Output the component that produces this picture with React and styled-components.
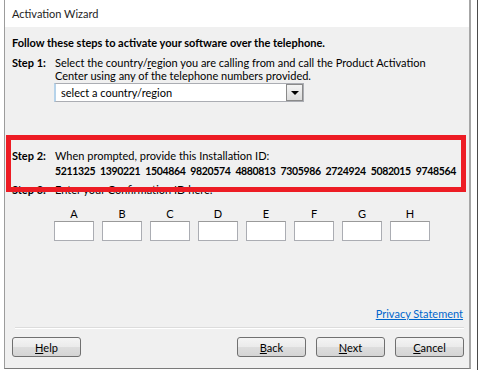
import React from 'react';
import styled, { createGlobalStyle } from 'styled-components';

const GlobalStyle = createGlobalStyle`
  html, body {
    margin: 0;
    padding: 0;
    background: #ffffff;
  }
  * {
    box-sizing: border-box;
  }
`;

const letters = ['A', 'B', 'C', 'D', 'E', 'F', 'G', 'H'];
const installationId = [
  '5211325', '1390221', '1504864', '9820574', '4880813',
  '7305986', '2724924', '5082015', '9748564',
];

const App = () => {
  return (
    <Page>
      <GlobalStyle />
      <Window>
        <TitleBar>Activation Wizard</TitleBar>
        <Body>
          <Intro>Follow these steps to activate your software over the telephone.</Intro>

          <StepRow top={7}>
            <StepLabel>Step 1:</StepLabel>
            <StepContent>
              <Text>
                Select the country/<u>r</u>egion you are calling from and call the Product Activation
                <br />
                Center using any of the telephone numbers provided.
              </Text>
              <Select>
                <span>select a country/region</span>
                <DropButton>
                  <Arrow />
                </DropButton>
              </Select>
            </StepContent>
          </StepRow>

          <StepRow top={47}>
            <StepLabel>Step 2:</StepLabel>
            <StepContent>
              <Text>When prompted, provide this Installation ID:</Text>
              <IdRow>
                {installationId.map((group) => (
                  <span key={group}>{group}</span>
                ))}
              </IdRow>
            </StepContent>
          </StepRow>

          <StepRow top={5}>
            <StepLabel>Step 3:</StepLabel>
            <StepContent>
              <Text>Enter your Confirmation ID here:</Text>
            </StepContent>
          </StepRow>

          <BoxGrid>
            {letters.map((l) => (
              <BoxColumn key={l}>
                <BoxLetter>{l}</BoxLetter>
                <CodeInput />
              </BoxColumn>
            ))}
          </BoxGrid>

          <Footer>
            <LinkRow>
              <PrivacyLink href="#">Privacy Statement</PrivacyLink>
            </LinkRow>
            <Separator />
            <ButtonRow>
              <Button>
                <u>H</u>elp
              </Button>
              <RightButtons>
                <Button>
                  <u>B</u>ack
                </Button>
                <Button>
                  <u>N</u>ext
                </Button>
                <Button>
                  <u>C</u>ancel
                </Button>
              </RightButtons>
            </ButtonRow>
          </Footer>
        </Body>
      </Window>
      <Highlight />
    </Page>
  );
};

export default App;

const Page = styled.div`
  position: relative;
  width: 478px;
  height: 370px;
  background: #ffffff;
  border-right: 1px solid #4a4a4a;
  font-family: Lato, 'Open Sans', sans-serif;
  font-size: 11px;
  color: #000000;
  overflow: hidden;
`;

const Window = styled.div`
  margin-left: 4px;
  width: 467px;
  height: 369px;
  border-left: 1px solid #9c9c9c;
  border-right: 2px solid #a6a6a6;
  border-bottom: 1px solid #7a7a7a;
  display: flex;
  flex-direction: column;
`;

const TitleBar = styled.div`
  height: 27px;
  flex: none;
  background: #ffffff;
  padding-left: 7px;
  display: flex;
  align-items: center;
  color: #1e1e1e;
`;

const Body = styled.div`
  flex: 1;
  background: #f0f0f0;
  padding: 9px 5px 11px 7px;
  display: flex;
  flex-direction: column;
`;

const Intro = styled.div`
  font-weight: 700;
  line-height: 13px;
  white-space: nowrap;
`;

const StepRow = styled.div`
  display: grid;
  grid-template-columns: 43px 1fr;
  margin-top: ${({ top }) => top}px;
  line-height: 13px;
`;

const StepLabel = styled.div`
  font-weight: 700;
`;

const StepContent = styled.div`
  display: flex;
  flex-direction: column;
`;

const Text = styled.div`
  white-space: nowrap;
  u {
    text-decoration-thickness: 1px;
  }
`;

const Select = styled.div`
  margin-top: 1px;
  margin-left: -1px;
  width: 250px;
  height: 19px;
  background: #ffffff;
  border: 1px solid #abadb3;
  border-left: 2px solid #b6d3ea;
  display: flex;
  align-items: center;
  justify-content: space-between;
  padding: 0 0 0 5px;
  span {
    line-height: 13px;
  }
`;

const DropButton = styled.div`
  width: 17px;
  height: 17px;
  border: 1px solid #8a8a8a;
  background: linear-gradient(#f4f4f4, #dcdcdc);
  display: flex;
  align-items: center;
  justify-content: center;
`;

const Arrow = styled.div`
  width: 0;
  height: 0;
  border-left: 4px solid transparent;
  border-right: 4px solid transparent;
  border-top: 4px solid #000000;
  margin-top: 1px;
`;

const IdRow = styled.div`
  margin-top: 3px;
  width: 401px;
  display: flex;
  justify-content: space-between;
  font-weight: 700;
  font-size: 10.5px;
  letter-spacing: -0.35px;
`;

const BoxGrid = styled.div`
  margin-top: 11px;
  margin-left: 42px;
  display: flex;
  gap: 8px;
`;

const BoxColumn = styled.div`
  width: 40px;
  display: flex;
  flex-direction: column;
  align-items: center;
`;

const BoxLetter = styled.div`
  line-height: 13px;
`;

const CodeInput = styled.div`
  margin-top: 1px;
  width: 40px;
  height: 20px;
  background: #ffffff;
  border: 1px solid #abadb3;
  border-top-color: #9a9a9a;
`;

const Footer = styled.div`
  margin-top: auto;
  display: flex;
  flex-direction: column;
`;

const LinkRow = styled.div`
  display: flex;
  justify-content: flex-end;
  padding-right: 1px;
  line-height: 13px;
`;

const PrivacyLink = styled.a`
  color: #0066cc;
  text-decoration: underline;
`;

const Separator = styled.div`
  margin: 7px 0 0 3px;
  height: 1px;
  background: #dcdcdc;
  border-bottom: 1px solid #ffffff;
  box-sizing: content-box;
`;

const ButtonRow = styled.div`
  margin-top: 8px;
  display: flex;
  justify-content: space-between;
`;

const RightButtons = styled.div`
  display: flex;
  gap: 10px;
`;

const Button = styled.button`
  width: 69px;
  height: 20px;
  padding: 0;
  border: 1px solid #707070;
  border-radius: 3px;
  background: linear-gradient(#f4f4f4 0%, #ebebeb 48%, #dddddd 52%, #d4d4d4 100%);
  font-family: inherit;
  font-size: 11px;
  color: #000000;
  line-height: 13px;
  u {
    text-decoration-thickness: 1px;
  }
`;

const Highlight = styled.div`
  position: absolute;
  left: 6px;
  top: 135px;
  width: 460px;
  height: 57px;
  border: 5px solid #ed1c24;
  pointer-events: none;
`;
